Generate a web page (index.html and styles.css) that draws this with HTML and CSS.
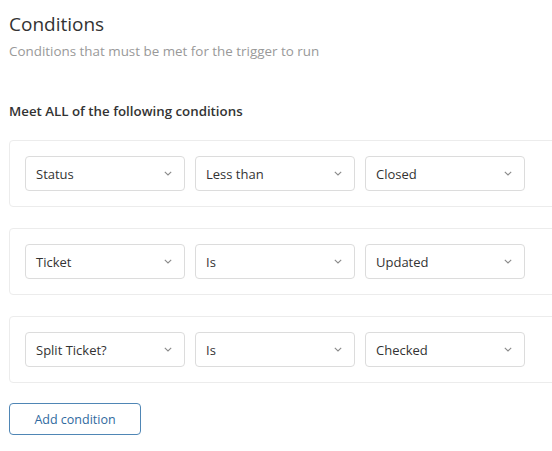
FILE: index.html
```html
<!DOCTYPE html>
<html>
<head>
<meta charset="utf-8">
<link rel="stylesheet" href="styles.css">
</head>
<body>
<div class="page">
  <h1 class="title">Conditions</h1>
  <p class="subtitle">Conditions that must be met for the trigger to run</p>
  <h2 class="group-label">Meet ALL of the following conditions</h2>
  <div class="conditions">
    <div class="card">
      <div class="select"><span>Status</span><svg class="chev" width="8" height="5" viewBox="0 0 8 5"><path d="M0.8 0.8 L4 4 L7.2 0.8" fill="none" stroke="#8a8a8a" stroke-width="1.1"/></svg></div>
      <div class="select"><span>Less than</span><svg class="chev" width="8" height="5" viewBox="0 0 8 5"><path d="M0.8 0.8 L4 4 L7.2 0.8" fill="none" stroke="#8a8a8a" stroke-width="1.1"/></svg></div>
      <div class="select"><span>Closed</span><svg class="chev" width="8" height="5" viewBox="0 0 8 5"><path d="M0.8 0.8 L4 4 L7.2 0.8" fill="none" stroke="#8a8a8a" stroke-width="1.1"/></svg></div>
    </div>
    <div class="card">
      <div class="select"><span>Ticket</span><svg class="chev" width="8" height="5" viewBox="0 0 8 5"><path d="M0.8 0.8 L4 4 L7.2 0.8" fill="none" stroke="#8a8a8a" stroke-width="1.1"/></svg></div>
      <div class="select"><span>Is</span><svg class="chev" width="8" height="5" viewBox="0 0 8 5"><path d="M0.8 0.8 L4 4 L7.2 0.8" fill="none" stroke="#8a8a8a" stroke-width="1.1"/></svg></div>
      <div class="select"><span>Updated</span><svg class="chev" width="8" height="5" viewBox="0 0 8 5"><path d="M0.8 0.8 L4 4 L7.2 0.8" fill="none" stroke="#8a8a8a" stroke-width="1.1"/></svg></div>
    </div>
    <div class="card">
      <div class="select"><span>Split Ticket?</span><svg class="chev" width="8" height="5" viewBox="0 0 8 5"><path d="M0.8 0.8 L4 4 L7.2 0.8" fill="none" stroke="#8a8a8a" stroke-width="1.1"/></svg></div>
      <div class="select"><span>Is</span><svg class="chev" width="8" height="5" viewBox="0 0 8 5"><path d="M0.8 0.8 L4 4 L7.2 0.8" fill="none" stroke="#8a8a8a" stroke-width="1.1"/></svg></div>
      <div class="select"><span>Checked</span><svg class="chev" width="8" height="5" viewBox="0 0 8 5"><path d="M0.8 0.8 L4 4 L7.2 0.8" fill="none" stroke="#8a8a8a" stroke-width="1.1"/></svg></div>
    </div>
  </div>
  <button class="add-btn">Add condition</button>
</div>
</body>
</html>
```
FILE: styles.css
```css
html, body {
  margin: 0;
  padding: 0;
  background: #fff;
  overflow: hidden;
}
body {
  font-family: "Open Sans", "Noto Sans", sans-serif;
  color: #333;
}
.page {
  padding: 10px 0 0 9px;
  width: 543px;
  overflow: hidden;
}
.title {
  margin: 0;
  font-size: 19px;
  font-weight: 400;
  line-height: 28px;
  color: #333;
}
.subtitle {
  margin: 4px 0 0;
  font-size: 13.4px;
  line-height: 18px;
  color: #999;
}
.group-label {
  margin: 42px 0 0;
  font-size: 13.3px;
  font-weight: 600;
  line-height: 18px;
  color: #333;
}
.conditions {
  margin-top: 20px;
  display: flex;
  flex-direction: column;
  gap: 21px;
  margin-right: -20px;
}
.card {
  border: 1px solid #ececec;
  border-radius: 4px;
  padding: 15px 15px;
  display: flex;
  gap: 10px;
  box-sizing: border-box;
}
.select {
  width: 160px;
  height: 35px;
  box-sizing: border-box;
  border: 1px solid #dcdcdc;
  border-radius: 4px;
  display: flex;
  align-items: center;
  justify-content: space-between;
  padding: 0 12px 0 10px;
  font-size: 13px;
  color: #333;
}
.chev {
  display: block;
}
.add-btn {
  margin-top: 20px;
  width: 132px;
  height: 32px;
  border: 1px solid #4f86b5;
  border-radius: 4px;
  background: #fff;
  color: #2f6aa0;
  font-family: "Open Sans", "Noto Sans", sans-serif;
  font-size: 12.5px;
  padding: 0;
}
```
